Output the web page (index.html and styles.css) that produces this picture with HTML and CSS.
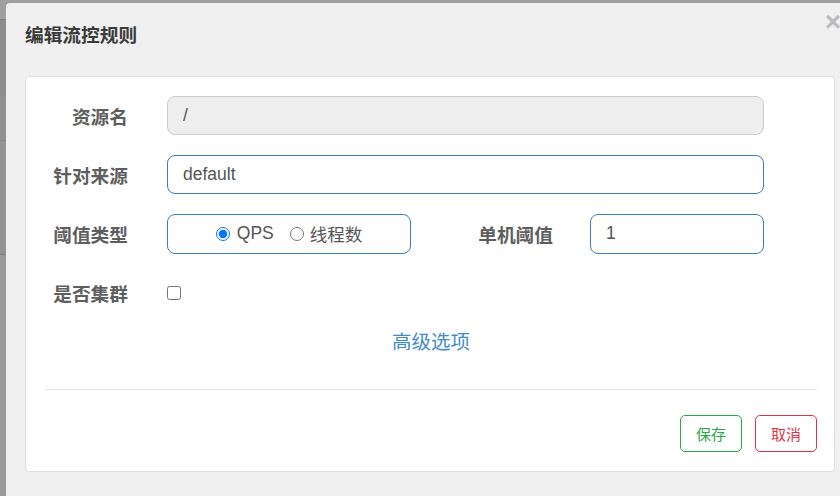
FILE: index.html
```html
<!DOCTYPE html>
<html lang="zh-CN">
<head>
    <meta charset="UTF-8">
    <meta name="viewport" content="width=device-width, initial-scale=1.0">
    <title>编辑流控规则</title>
    <link rel="stylesheet" href="styles.css">
</head>
<body>
    <div class="modal">
        <div class="modal-header">
            <h4 class="modal-title">编辑流控规则</h4>
            <button class="close" type="button">&times;</button>
        </div>

        <div class="rule-panel">
            <form class="rule-form">
                <div class="form-row">
                    <label class="form-label">资源名</label>
                    <input class="form-control" type="text" value="/" disabled>
                </div>
                <div class="form-row">
                    <label class="form-label">针对来源</label>
                    <input class="form-control" type="text" value="default">
                </div>
                <div class="form-row">
                    <label class="form-label">阈值类型</label>
                    <div class="radio-group">
                        <label class="radio"><input type="radio" name="grade" checked>QPS</label>
                        <label class="radio"><input type="radio" name="grade">线程数</label>
                    </div>
                    <label class="form-label label-inline">单机阈值</label>
                    <input class="form-control input-short" type="text" value="1">
                </div>
                <div class="form-row">
                    <label class="form-label">是否集群</label>
                    <input class="checkbox" type="checkbox">
                </div>
                <div class="advanced">
                    <a href="#">高级选项</a>
                </div>
            </form>

            <div class="modal-footer">
                <button class="btn btn-save" type="button">保存</button>
                <button class="btn btn-cancel" type="button">取消</button>
            </div>
        </div>
    </div>
</body>
</html>
```

FILE: styles.css
```css
* {
    box-sizing: border-box;
}

html, body {
    margin: 0;
    height: 100%;
    overflow: hidden;
}

body {
    font-family: "Liberation Sans", "Noto Sans CJK SC", sans-serif;
    background: linear-gradient(to bottom,
        #9f9f9f 0, #9f9f9f 19px,
        #818181 19px, #818181 20px,
        #8d8d8d 20px, #8d8d8d 96px,
        #909090 96px, #909090 140px,
        #858585 140px, #858585 141px,
        #939393 141px, #939393 254px,
        #808080 254px, #808080 255px,
        #9a9a9a 255px);
}

.modal {
    margin: 3px 0 0 6px;
    width: 848px;
    height: 493px;
    padding: 0 19px;
    background-color: #f0f0f0;
    border-top-left-radius: 4px;
}

.modal-header {
    display: flex;
    justify-content: space-between;
    align-items: flex-start;
    height: 73px;
}

.modal-title {
    margin: 0;
    padding-top: 20px;
    font-size: 18.7px;
    line-height: 26px;
    font-weight: bold;
    color: #3a3a3a;
}

.close {
    margin: 5px -6px 0 0;
    padding: 0;
    border: none;
    background: none;
    font-family: "Liberation Sans", sans-serif;
    font-size: 28px;
    font-weight: bold;
    line-height: 1;
    color: #bcbcbc;
}

.rule-panel {
    background-color: #fff;
    border: 1px solid #ddd;
    border-radius: 4px;
    padding: 19px 17px 19px 19px;
}

.form-row {
    display: flex;
    align-items: center;
    height: 39px;
    margin-bottom: 20px;
}

.form-label {
    flex: none;
    width: 83px;
    margin-right: 39px;
    text-align: right;
    font-size: 18.7px;
    font-weight: bold;
    color: #5e5e5e;
}

.form-control {
    width: 597px;
    height: 39px;
    padding: 0 15px;
    border: 1px solid #3b7dbf;
    border-radius: 8px;
    background-color: #fff;
    font-family: inherit;
    font-size: 17.5px;
    color: #555;
    outline: none;
}

.form-control:disabled {
    background-color: #eee;
    border-color: #ccc;
}

.radio-group {
    display: flex;
    justify-content: center;
    align-items: center;
    width: 244px;
    height: 40px;
    border: 1px solid #3b7dbf;
    border-radius: 8px;
    font-size: 17.5px;
    color: #555;
}

.radio {
    display: flex;
    align-items: center;
}

.radio + .radio {
    margin-left: 16px;
}

.radio input {
    width: 14px;
    height: 14px;
    margin: 0 7px 0 0;
}

.radio + .radio input {
    margin-right: 6px;
}

.label-inline {
    width: 142px;
    margin-right: 37px;
}

.input-short {
    width: 174px;
    height: 40px;
}

.checkbox {
    width: 14px;
    height: 14px;
    margin: 0;
}

.advanced {
    text-align: center;
    line-height: 20px;
}

.advanced a {
    font-size: 19.5px;
    color: #428bca;
    text-decoration: none;
}

.modal-footer {
    display: flex;
    justify-content: flex-end;
    gap: 13px;
    margin-top: 35px;
    padding-top: 25px;
    border-top: 1px solid #e5e5e5;
}

.btn {
    width: 62px;
    height: 37px;
    padding: 0;
    border: 1px solid;
    border-radius: 5px;
    background-color: #fff;
    font-family: inherit;
    font-size: 15px;
}

.btn-save {
    color: #28a745;
    border-color: #28a745;
}

.btn-cancel {
    color: #dc3545;
    border-color: #dc3545;
}
```
